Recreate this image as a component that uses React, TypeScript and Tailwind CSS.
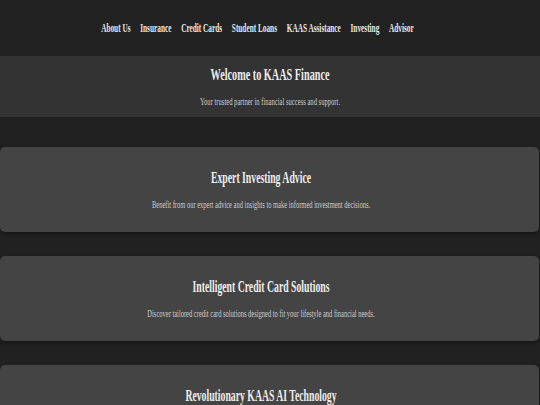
import React from 'react';

const navItems = ['About Us', 'Insurance', 'Credit Cards', 'Student Loans', 'KAAS Assistance', 'Investing', 'Advisor'];

const features = [
  {
    title: 'Expert Investing Advice',
    text: 'Benefit from our expert advice and insights to make informed investment decisions.',
  },
  {
    title: 'Intelligent Credit Card Solutions',
    text: 'Discover tailored credit card solutions designed to fit your lifestyle and financial needs.',
  },
  {
    title: 'Revolutionary KAAS AI Technology',
    text: 'Experience the power of AI-driven insights for smarter financial planning.',
  },
];

const App: React.FC = () => {
  return (
    <div className="min-h-screen overflow-x-hidden bg-[#212121] font-['Liberation_Serif','Times_New_Roman',serif]">
      {/* Header nav */}
      <nav className="h-[56px] bg-[#222222] flex items-center justify-center pr-[26px]">
        <ul className="flex shrink-0 gap-[18px] scale-x-[0.54] whitespace-nowrap">
          {navItems.map((item) => (
            <li key={item} className="shrink-0 text-[13.5px] font-bold text-[#e8e8e8] leading-none">
              {item}
            </li>
          ))}
        </ul>
      </nav>

      {/* Hero */}
      <section className="bg-[#333333] pt-[9px] pb-[9px] text-center">
        <h1 className="text-[16.5px] leading-[20px] font-bold text-[#eeeeee] scale-x-[0.62] whitespace-nowrap">
          Welcome to KAAS Finance
        </h1>
        <p className="mt-[9px] text-[11px] leading-[14px] text-[#cccccc] scale-x-[0.6] whitespace-nowrap">
          Your trusted partner in financial success and support.
        </p>
      </section>

      {/* Feature cards */}
      <main className="mt-[30px] flex flex-col gap-[24px] pr-[1px]">
        {features.map((f) => (
          <div
            key={f.title}
            className="bg-[#444444] rounded-[5px] pt-[21px] pb-[21px] pr-[17px] text-center shadow-[0_2px_4px_rgba(0,0,0,0.35)]"
          >
            <h2 className="text-[16.5px] leading-[20px] font-bold text-[#eeeeee] scale-x-[0.59] whitespace-nowrap">
              {f.title}
            </h2>
            <p className="mt-[9px] text-[11px] leading-[14px] text-[#cccccc] scale-x-[0.59] whitespace-nowrap">
              {f.text}
            </p>
          </div>
        ))}
      </main>
    </div>
  );
};

export default App;
